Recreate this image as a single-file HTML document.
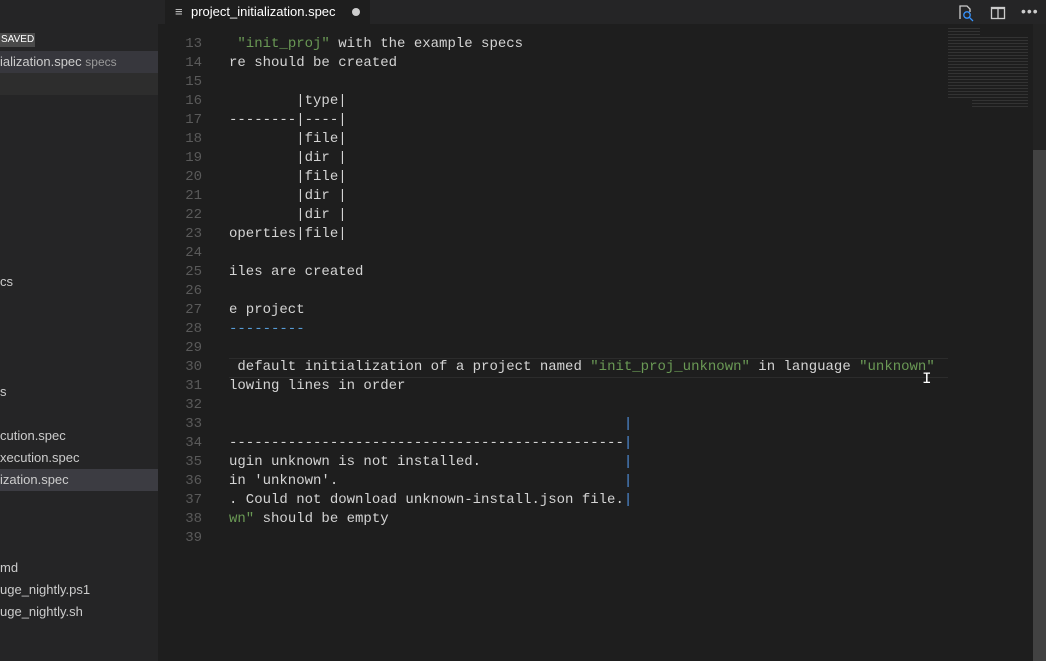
<!DOCTYPE html>
<html><head><meta charset="utf-8"><style>
*{margin:0;padding:0;box-sizing:border-box}
body{width:1046px;height:661px;background:#1e1e1e;overflow:hidden;position:relative;font-family:"Liberation Sans","DejaVu Sans",sans-serif}
.side{position:absolute;left:0;top:0;width:158px;height:661px;background:#252526}
.si{position:absolute;left:0;height:22px;width:158px;color:#ccc;font-size:13px;line-height:22px;white-space:nowrap;overflow:hidden}
.tabs{position:absolute;left:158px;top:0;width:888px;height:24px;background:#252526}
.tab{position:absolute;left:165px;top:0;width:205px;height:24px;background:#1e1e1e;color:#fff;font-size:13px;line-height:24px}
.ln{position:absolute;left:160px;width:42px;text-align:right;color:#5a5a5a;font:14px/19px "Liberation Mono",monospace;margin-top:1px}
.cd{position:absolute;left:229px;color:#d4d4d4;font:14px/19px "Liberation Mono",monospace;white-space:pre;margin-top:1px}
.s{color:#6a9955}.b{color:#569cd6}.p{color:#4f8fdc}
</style></head><body>
<div class="side">
<div style="position:absolute;left:0;top:33px;width:35px;height:14px;background:#4a4a4a;color:#fff;font-size:10px;line-height:14px;padding-left:1px">SAVED</div>
<div class="si" style="top:51px;background:#37373d">ialization.spec <span style="color:#999;font-size:12px">specs</span></div>
<div class="si" style="top:73px;background:#2d2d2d"></div>
<div class="si" style="top:271px">cs</div>
<div class="si" style="top:381px">s</div>
<div class="si" style="top:425px">cution.spec</div>
<div class="si" style="top:447px">xecution.spec</div>
<div class="si" style="top:469px;background:#3c3c42">ization.spec</div>
<div class="si" style="top:557px">md</div>
<div class="si" style="top:579px">uge_nightly.ps1</div>
<div class="si" style="top:601px">uge_nightly.sh</div>
</div>
<div class="tabs"></div>
<div class="tab"><span style="position:absolute;left:10px;color:#ccc">≡</span><span style="position:absolute;left:26px">project_initialization.spec</span><span style="position:absolute;left:187px;top:8px;width:8px;height:8px;border-radius:50%;background:#ccc"></span></div>
<svg style="position:absolute;left:957px;top:4px" width="18" height="18" viewBox="0 0 18 18" fill="none" stroke="#ccc" stroke-width="1.3"><path d="M3 15V2h7l3 3v3"/><circle cx="10" cy="11" r="3.2" stroke="#3794ff"/><path d="M12.3 13.3 16 17" stroke="#3794ff"/></svg>
<svg style="position:absolute;left:990px;top:5px" width="16" height="16" fill="none" stroke="#ccc" stroke-width="1.3"><rect x="1.5" y="2.5" width="13" height="11"/><path d="M8 2.5v11M1.5 3.5h13"/></svg>
<div style="position:absolute;left:1021px;top:3px;color:#ccc;font-size:14px;letter-spacing:1px">•••</div>
<div style="position:absolute;left:1033px;top:24px;width:13px;height:637px;background:#232323"></div>
<div style="position:absolute;left:1033px;top:150px;width:13px;height:511px;background:#424242"></div>
<div style="position:absolute;left:948px;top:28px;width:80px;height:80px;opacity:.15;background:repeating-linear-gradient(#aaa 0 1px,transparent 1px 3px);clip-path:polygon(0 0,40% 0,40% 10%,100% 10%,100% 100%,30% 100%,30% 90%,0 90%)"></div>
<div style="position:absolute;left:229px;top:358px;width:719px;height:20px;border-top:1px solid #2c2c2c;border-bottom:1px solid #2c2c2c"></div>
<div class="ln" style="top:34px">13</div><div class="cd" style="top:34px"> <span class="s">"init_proj"</span> with the example specs</div>
<div class="ln" style="top:53px">14</div><div class="cd" style="top:53px">re should be created</div>
<div class="ln" style="top:72px">15</div>
<div class="ln" style="top:91px">16</div><div class="cd" style="top:91px">        |type|</div>
<div class="ln" style="top:110px">17</div><div class="cd" style="top:110px">--------|----|</div>
<div class="ln" style="top:129px">18</div><div class="cd" style="top:129px">        |file|</div>
<div class="ln" style="top:148px">19</div><div class="cd" style="top:148px">        |dir |</div>
<div class="ln" style="top:167px">20</div><div class="cd" style="top:167px">        |file|</div>
<div class="ln" style="top:186px">21</div><div class="cd" style="top:186px">        |dir |</div>
<div class="ln" style="top:205px">22</div><div class="cd" style="top:205px">        |dir |</div>
<div class="ln" style="top:224px">23</div><div class="cd" style="top:224px">operties|file|</div>
<div class="ln" style="top:243px">24</div>
<div class="ln" style="top:262px">25</div><div class="cd" style="top:262px">iles are created</div>
<div class="ln" style="top:281px">26</div>
<div class="ln" style="top:300px">27</div><div class="cd" style="top:300px">e project</div>
<div class="ln" style="top:319px">28</div><div class="cd b" style="top:319px">---------</div>
<div class="ln" style="top:338px">29</div>
<div class="ln" style="top:357px">30</div><div class="cd" style="top:357px"> default initialization of a project named <span class="s">"init_proj_unknown"</span> in language <span class="s">"unknown"</span></div>
<div class="ln" style="top:376px">31</div><div class="cd" style="top:376px">lowing lines in order</div>
<div class="ln" style="top:395px">32</div>
<div class="ln" style="top:414px">33</div><div class="cd" style="top:414px">                                               <span class="p">|</span></div>
<div class="ln" style="top:433px">34</div><div class="cd" style="top:433px">-----------------------------------------------<span class="p">|</span></div>
<div class="ln" style="top:452px">35</div><div class="cd" style="top:452px">ugin unknown is not installed.                 <span class="p">|</span></div>
<div class="ln" style="top:471px">36</div><div class="cd" style="top:471px">in 'unknown'.                                  <span class="p">|</span></div>
<div class="ln" style="top:490px">37</div><div class="cd" style="top:490px">. Could not download unknown-install.json file.<span class="p">|</span></div>
<div class="ln" style="top:509px">38</div><div class="cd" style="top:509px"><span class="s">wn"</span> should be empty</div>
<div class="ln" style="top:528px">39</div>
<div style="position:absolute;left:922px;top:370px;color:#fff;font:16px 'Liberation Mono',monospace">I</div>
</body></html>
